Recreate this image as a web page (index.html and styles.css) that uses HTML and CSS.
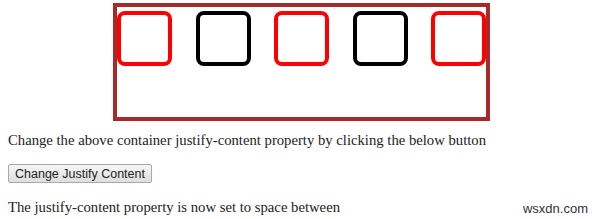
FILE: index.html
```html
<!DOCTYPE html>
<html lang="en">
<head>
    <meta charset="UTF-8">
    <title>Justify Content</title>
    <link rel="stylesheet" href="styles.css">
</head>
<body>
    <div class="container" id="container">
        <div class="box red"></div>
        <div class="box black"></div>
        <div class="box red"></div>
        <div class="box black"></div>
        <div class="box red"></div>
    </div>

    <p class="info">Change the above container justify-content property by clicking the below button</p>

    <div class="controls">
        <button class="btn" id="changeBtn">Change Justify Content</button>
    </div>

    <div class="result-row">
        <p class="result" id="result">The justify-content property is now set to space between</p>
        <span class="mark">wsxdn.com</span>
    </div>
</body>
</html>
```

FILE: styles.css
```css
body {
    font-family: "Liberation Serif", "Times New Roman", serif;
    font-size: 14.7px;
    color: #222;
    background-color: #fff;
    margin: 3px 8px 0;
}

.container {
    display: flex;
    justify-content: space-between;
    align-items: flex-start;
    width: 369px;
    height: 110px;
    margin-left: 105px;
    border: 4px solid #a52a2a;
}

.box {
    box-sizing: border-box;
    width: 55px;
    height: 55px;
    margin-top: 4px;
    border: 4px solid;
    border-radius: 8px;
}

.red {
    border-color: #f00;
}

.black {
    border-color: #000;
}

.info {
    margin: 11px 0 0;
    line-height: 16px;
}

.controls {
    margin: 16px 0 0;
}

.btn {
    font-family: "Liberation Sans", Arial, sans-serif;
    font-size: 12.5px;
    color: #222;
    height: 19px;
    padding: 0 6px;
    margin: 0;
    background: linear-gradient(#f6f6f6, #dedede);
    border: 1px solid #a9a9a9;
    border-radius: 2px;
}

.result-row {
    display: flex;
    justify-content: space-between;
    align-items: center;
    margin-top: 14px;
}

.result {
    margin: 0;
    line-height: 16px;
}

.mark {
    font-family: "Liberation Sans", Arial, sans-serif;
    font-size: 13px;
    color: #333;
    margin-right: 4px;
    margin-top: 4px;
}
```
